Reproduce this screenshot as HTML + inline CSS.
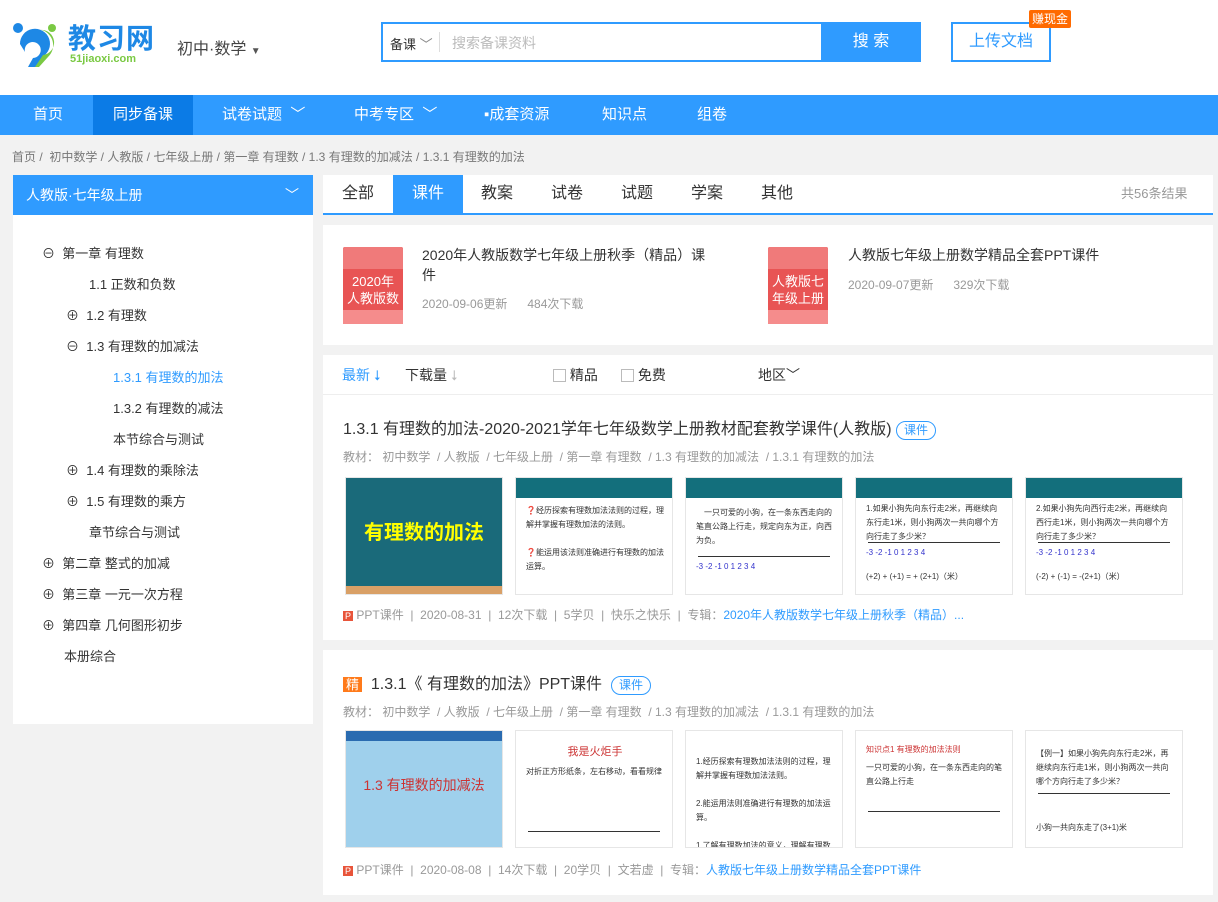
<!DOCTYPE html><html><head><meta charset="utf-8"><style>
*{margin:0;padding:0;box-sizing:border-box}
body{width:1218px;height:902px;overflow:hidden;background:#f2f2f2;font-family:"Liberation Sans","Noto Sans CJK SC",sans-serif;font-size:14px;color:#333;position:relative}
.a{position:absolute}
.hdr{left:0;top:0;width:1218px;height:95px;background:#fff}
.nav{left:0;top:95px;width:1218px;height:40px;background:#2f9bff;color:#fff;font-size:15px}
.nav span{position:absolute;top:0;line-height:40px}
.g{color:#999;font-size:12px}
.thumb{position:absolute;width:158px;height:118px;background:#fff;border:1px solid #e6e6e6;overflow:hidden}
.thumb .t{height:20px;background:#136f7c}
.thumb .l{position:absolute;left:12px;right:12px;height:1px;background:#333}
.thumb .x{position:absolute;left:10px;right:8px;font-size:8px;color:#333;line-height:14px}
.book{position:absolute;width:60px;height:77px;background:#e85454;border-radius:2px;color:#fff;font-size:13px;text-align:center;padding-top:26px;line-height:17px}
.book:before{content:"";position:absolute;left:0;top:0;right:0;height:22px;background:#f07a7a;border-radius:2px 2px 0 0}
.book:after{content:"";position:absolute;left:0;bottom:0;right:0;height:14px;background:#f58c8c}
</style></head><body>
<div class="a hdr">
 <svg class="a" style="left:12px;top:22px" width="48" height="46" viewBox="0 0 48 46"><circle cx="6" cy="6" r="5" fill="#1e88e5"/><path d="M8 22a15 15 0 1 1 22 13l-6 10h-8l5-9a8 8 0 1 0-8-6z" fill="#1e88e5"/><path d="M30 8a16 16 0 0 1 6 27l-9 10h-4l8-12a12 12 0 0 0-3-25z" fill="#7ac943"/><circle cx="40" cy="6" r="4" fill="#7ac943"/></svg>
 <div class="a" style="left:68px;top:22px;font-size:28px;color:#1e88e5;font-weight:bold;letter-spacing:1px;line-height:34px">教习网</div>
 <div class="a" style="left:70px;top:53px;font-size:11px;color:#7ac943;font-weight:bold;line-height:13px">51jiaoxi.com</div>
 <div class="a" style="left:177px;top:35px;font-size:16px;color:#444">初中·数学 <span style="font-size:10px;color:#555">▼</span></div>
 <div class="a" style="left:381px;top:22px;width:540px;height:40px;border:2px solid #2f9bff;background:#fff"></div>
 <div class="a" style="left:390px;top:34px;font-size:13px">备课 <span style="color:#888">﹀</span></div>
 <div class="a" style="left:439px;top:32px;width:1px;height:20px;background:#ddd"></div>
 <div class="a" style="left:452px;top:33px;color:#bbb">搜索备课资料</div>
 <div class="a" style="left:821px;top:22px;width:100px;height:40px;background:#2f9bff;color:#fff;font-size:16px;text-align:center;line-height:40px">搜 索</div>
 <div class="a" style="left:951px;top:22px;width:100px;height:40px;border:2px solid #2f9bff;color:#2f9bff;font-size:16px;text-align:center;line-height:36px">上传文档</div>
 <div class="a" style="left:1029px;top:10px;background:#ff6a00;color:#fff;font-size:12px;padding:0 3px;line-height:18px;border-radius:2px">赚现金</div>
</div>
<div class="a nav">
 <span style="left:33px">首页</span>
 <span style="left:93px;width:100px;background:#0b7be6;text-align:center">同步备课</span>
 <span style="left:222px">试卷试题 &nbsp;﹀</span>
 <span style="left:354px">中考专区 &nbsp;﹀</span>
 <span style="left:484px">▪成套资源</span>
 <span style="left:602px">知识点</span>
 <span style="left:697px">组卷</span>
</div>
<div class="a" style="left:12px;top:148px;font-size:12px;color:#777">首页 / &nbsp;初中数学 / 人教版 / 七年级上册 / 第一章 有理数 / 1.3 有理数的加减法 / 1.3.1 有理数的加法</div>
<div class="a" style="left:13px;top:175px;width:300px;height:40px;background:#2f9bff;color:#fff;font-size:14px;line-height:40px;padding-left:13px">人教版·七年级上册<span style="position:absolute;right:14px">﹀</span></div>
<div class="a" style="left:13px;top:215px;width:300px;height:509px;background:#fff;font-size:13px;color:#333">
 <div class="a" style="left:29px;top:28px">⊖ &nbsp;第一章 有理数</div>
 <div class="a" style="left:76px;top:59px">1.1 正数和负数</div>
 <div class="a" style="left:53px;top:90px">⊕ &nbsp;1.2 有理数</div>
 <div class="a" style="left:53px;top:121px">⊖ &nbsp;1.3 有理数的加减法</div>
 <div class="a" style="left:100px;top:152px;color:#2f9bff">1.3.1 有理数的加法</div>
 <div class="a" style="left:100px;top:183px">1.3.2 有理数的减法</div>
 <div class="a" style="left:100px;top:214px">本节综合与测试</div>
 <div class="a" style="left:53px;top:245px">⊕ &nbsp;1.4 有理数的乘除法</div>
 <div class="a" style="left:53px;top:276px">⊕ &nbsp;1.5 有理数的乘方</div>
 <div class="a" style="left:76px;top:307px">章节综合与测试</div>
 <div class="a" style="left:29px;top:338px">⊕ &nbsp;第二章 整式的加减</div>
 <div class="a" style="left:29px;top:369px">⊕ &nbsp;第三章 一元一次方程</div>
 <div class="a" style="left:29px;top:400px">⊕ &nbsp;第四章 几何图形初步</div>
 <div class="a" style="left:51px;top:431px">本册综合</div>
</div>
<div class="a" style="left:323px;top:175px;width:890px;height:40px;background:#fff;border-bottom:2px solid #2f9bff;font-size:16px;line-height:38px">
 <span class="a" style="left:19px">全部</span>
 <span class="a" style="left:70px;width:70px;background:#2f9bff;color:#fff;text-align:center">课件</span>
 <span class="a" style="left:158px">教案</span><span class="a" style="left:228px">试卷</span><span class="a" style="left:298px">试题</span><span class="a" style="left:368px">学案</span><span class="a" style="left:438px">其他</span>
 <span class="a g" style="left:798px;font-size:13px">共56条结果</span>
</div>
<div class="a" style="left:323px;top:225px;width:890px;height:120px;background:#fff">
 <div class="book" style="left:20px;top:22px"><span style="position:relative;z-index:1">2020年<br>人教版数</span></div>
 <div class="a" style="left:99px;top:20px;width:292px;font-size:14px;line-height:20px">2020年人教版数学七年级上册秋季（精品）课件</div>
 <div class="a g" style="left:99px;top:70px;font-size:12px">2020-09-06更新 &nbsp; &nbsp; &nbsp;484次下载</div>
 <div class="book" style="left:445px;top:22px"><span style="position:relative;z-index:1">人教版七<br>年级上册</span></div>
 <div class="a" style="left:525px;top:20px;font-size:14px">人教版七年级上册数学精品全套PPT课件</div>
 <div class="a g" style="left:525px;top:51px;font-size:12px">2020-09-07更新 &nbsp; &nbsp; &nbsp;329次下载</div>
</div>
<div class="a" style="left:323px;top:355px;width:890px;height:40px;background:#fff;border-bottom:1px solid #eee;font-size:14px;line-height:40px">
 <span class="a" style="left:19px;color:#2f9bff">最新 ⭣</span><span class="a" style="left:82px">下载量 <span style="color:#bbb">⭣</span></span>
 <span class="a" style="left:230px"><span style="display:inline-block;width:13px;height:13px;border:1px solid #bbb;vertical-align:-2px"></span> 精品</span>
 <span class="a" style="left:298px"><span style="display:inline-block;width:13px;height:13px;border:1px solid #bbb;vertical-align:-2px"></span> 免费</span>
 <span class="a" style="left:435px">地区﹀</span>
</div>
<div class="a" style="left:323px;top:395px;width:890px;height:245px;background:#fff">
 <div class="a" style="left:20px;top:20px;font-size:16px">1.3.1 有理数的加法-2020-2021学年七年级数学上册教材配套教学课件(人教版) <span style="display:inline-block;border:1px solid #2f9bff;color:#2f9bff;border-radius:10px;font-size:12px;padding:0 7px;line-height:17px">课件</span></div>
 <div class="a g" style="left:20px;top:53px">教材： 初中数学 &nbsp;/ 人教版 &nbsp;/ 七年级上册 &nbsp;/ 第一章 有理数 &nbsp;/ 1.3 有理数的加减法 &nbsp;/ 1.3.1 有理数的加法</div>
 <div class="thumb" style="left:22px;top:82px;background:#1a6a7a;color:#ff0;font-size:20px;font-weight:bold;text-align:center;padding-top:38px">有理数的加法<div style="position:absolute;left:0;right:0;bottom:0;height:8px;background:#d9a066"></div></div>
 <div class="thumb" style="left:192px;top:82px"><div class="t"></div><div class="x" style="top:26px">❓经历探索有理数加法法则的过程，理解并掌握有理数加法的法则。<br><br>❓能运用该法则准确进行有理数的加法运算。</div></div>
 <div class="thumb" style="left:362px;top:82px"><div class="t"></div><div class="x" style="top:28px">　一只可爱的小狗，在一条东西走向的笔直公路上行走，规定向东为正，向西为负。</div><div class="l" style="top:78px"></div><div class="x" style="top:82px;color:#33c">-3 -2 -1 0 1 2 3 4</div></div>
 <div class="thumb" style="left:532px;top:82px"><div class="t"></div><div class="x" style="top:24px">1.如果小狗先向东行走2米，再继续向东行走1米，则小狗两次一共向哪个方向行走了多少米？</div><div class="l" style="top:64px"></div><div class="x" style="top:68px;color:#33c">-3 -2 -1 0 1 2 3 4</div><div class="x" style="top:92px">(+2) + (+1) = + (2+1)（米）</div></div>
 <div class="thumb" style="left:702px;top:82px"><div class="t"></div><div class="x" style="top:24px">2.如果小狗先向西行走2米，再继续向西行走1米，则小狗两次一共向哪个方向行走了多少米？</div><div class="l" style="top:64px"></div><div class="x" style="top:68px;color:#33c">-3 -2 -1 0 1 2 3 4</div><div class="x" style="top:92px">(-2) + (-1) = -(2+1)（米）</div></div>
 <div class="a g" style="left:20px;top:211px"><span style="background:#e8543a;color:#fff;font-size:9px;padding:0 2px">P</span> PPT课件 &nbsp;| &nbsp;2020-08-31 &nbsp;| &nbsp;12次下载 &nbsp;| &nbsp;5学贝 &nbsp;| &nbsp;快乐之快乐 &nbsp;| &nbsp;专辑：<span style="color:#2f9bff">2020年人教版数学七年级上册秋季（精品）...</span></div>
</div>
<div class="a" style="left:323px;top:650px;width:890px;height:245px;background:#fff">
 <div class="a" style="left:20px;top:20px;font-size:16px"><span style="background:#ff7a1a;color:#fff;font-size:13px;padding:0 3px">精</span> &nbsp;1.3.1《 有理数的加法》PPT课件 &nbsp;<span style="display:inline-block;border:1px solid #2f9bff;color:#2f9bff;border-radius:10px;font-size:12px;padding:0 7px;line-height:17px">课件</span></div>
 <div class="a g" style="left:20px;top:53px">教材： 初中数学 &nbsp;/ 人教版 &nbsp;/ 七年级上册 &nbsp;/ 第一章 有理数 &nbsp;/ 1.3 有理数的加减法 &nbsp;/ 1.3.1 有理数的加法</div>
 <div class="thumb" style="left:22px;top:80px;background:#9fd0ec;color:#c33;font-size:14px;text-align:center;padding-top:44px">1.3 有理数的加减法<div style="position:absolute;left:0;right:0;top:0;height:10px;background:#2a6bb0"></div></div>
 <div class="thumb" style="left:192px;top:80px"><div class="x" style="top:14px;color:#c33;text-align:center;font-size:11px">我是火炬手</div><div class="x" style="top:34px">对折正方形纸条，左右移动，看看规律</div><div class="l" style="top:100px"></div></div>
 <div class="thumb" style="left:362px;top:80px"><div class="x" style="top:24px">1.经历探索有理数加法法则的过程，理解并掌握有理数加法法则。<br><br>2.能运用法则准确进行有理数的加法运算。<br><br>1.了解有理数加法的意义，理解有理数加法运算的合理性。</div></div>
 <div class="thumb" style="left:532px;top:80px"><div class="x" style="top:12px;color:#c33">知识点1 有理数的加法法则</div><div class="x" style="top:30px">一只可爱的小狗，在一条东西走向的笔直公路上行走</div><div class="l" style="top:80px"></div></div>
 <div class="thumb" style="left:702px;top:80px"><div class="x" style="top:16px">【例一】如果小狗先向东行走2米，再继续向东行走1米，则小狗两次一共向哪个方向行走了多少米？</div><div class="l" style="top:62px"></div><div class="x" style="top:90px">小狗一共向东走了(3+1)米</div></div>
 <div class="a g" style="left:20px;top:211px"><span style="background:#e8543a;color:#fff;font-size:9px;padding:0 2px">P</span> PPT课件 &nbsp;| &nbsp;2020-08-08 &nbsp;| &nbsp;14次下载 &nbsp;| &nbsp;20学贝 &nbsp;| &nbsp;文若虚 &nbsp;| &nbsp;专辑：<span style="color:#2f9bff">人教版七年级上册数学精品全套PPT课件</span></div>
</div>
</body></html>
